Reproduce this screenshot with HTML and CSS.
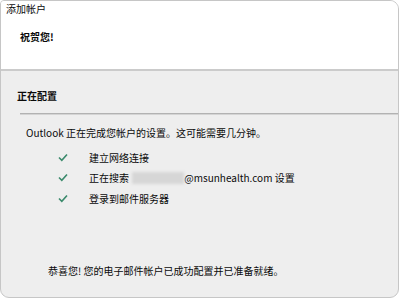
FILE: index.html
```html
<!DOCTYPE html>
<html lang="zh-CN">

<head>
    <meta charset="UTF-8">
    <title>添加帐户</title>
    <link rel="stylesheet" href="styles.css">
</head>

<body>

    <div class="window">
        <div class="header">
            <div class="title">添加帐户</div>
            <div class="greeting">祝贺您!</div>
        </div>

        <div class="content">
            <div class="section-title">正在配置</div>
            <div class="rule"></div>

            <p class="intro">Outlook 正在完成您帐户的设置。这可能需要几分钟。</p>

            <ul class="steps">
                <li>
                    <svg class="check" width="10" height="9" viewBox="0 0 10 9">
                        <polyline points="1,4.5 3.8,7.3 9,1.5" />
                    </svg>
                    <span>建立网络连接</span>
                </li>
                <li>
                    <svg class="check" width="10" height="9" viewBox="0 0 10 9">
                        <polyline points="1,4.5 3.8,7.3 9,1.5" />
                    </svg>
                    <span>正在搜索 <span class="redacted"></span>@msunhealth.com 设置</span>
                </li>
                <li>
                    <svg class="check" width="10" height="9" viewBox="0 0 10 9">
                        <polyline points="1,4.5 3.8,7.3 9,1.5" />
                    </svg>
                    <span>登录到邮件服务器</span>
                </li>
            </ul>

            <p class="done">恭喜您! 您的电子邮件帐户已成功配置并已准备就绪。</p>
        </div>
    </div>

</body>

</html>
```

FILE: styles.css
```css
* {
    margin: 0;
    padding: 0;
    box-sizing: border-box;
}

body {
    font-family: "Noto Sans CJK SC", "Noto Sans", sans-serif;
    font-size: 10px;
    color: #0a0a0a;
    background-color: #ffffff;
    width: 400px;
    height: 300px;
    overflow: hidden;
}

.window {
    width: 399px;
    height: 298px;
    border: 1px solid #c6c6c6;
    border-radius: 4px 9px 9px 9px;
    overflow: hidden;
    background-color: #eeeeee;
}

.header {
    height: 70px;
    background-color: #ffffff;
    border-bottom: 2px solid #cbcbcb;
    padding: 1px 0 0 5px;
}

.title {
    line-height: 14px;
}

.greeting {
    margin: 14px 0 0 14px;
    line-height: 14px;
    font-weight: bold;
}

.content {
    padding: 18px 0 0 16px;
}

.section-title {
    line-height: 14px;
    font-weight: bold;
}

.rule {
    margin: 10px 0 0 3px;
    height: 2px;
    border-top: 1px solid #b2b2b2;
    border-bottom: 1px solid #d4d4d4;
}

.intro {
    margin: 11px 0 0 9px;
    line-height: 14px;
}

.steps {
    list-style: none;
    margin: 7px 0 0 41px;
}

.steps li {
    display: flex;
    align-items: center;
    height: 20.5px;
}

.check polyline {
    fill: none;
    stroke: #3b8a6c;
    stroke-width: 1.6;
}

.steps svg.check {
    flex: 0 0 auto;
    width: 10px;
    margin-right: 21px;
}

.redacted {
    display: inline-block;
    width: 52px;
    height: 12px;
    margin-left: 1px;
    vertical-align: -2px;
    background-color: #d6d6d6;
    filter: blur(1.5px);
}

.done {
    margin: 55px 0 0 31px;
    line-height: 14px;
}
```
